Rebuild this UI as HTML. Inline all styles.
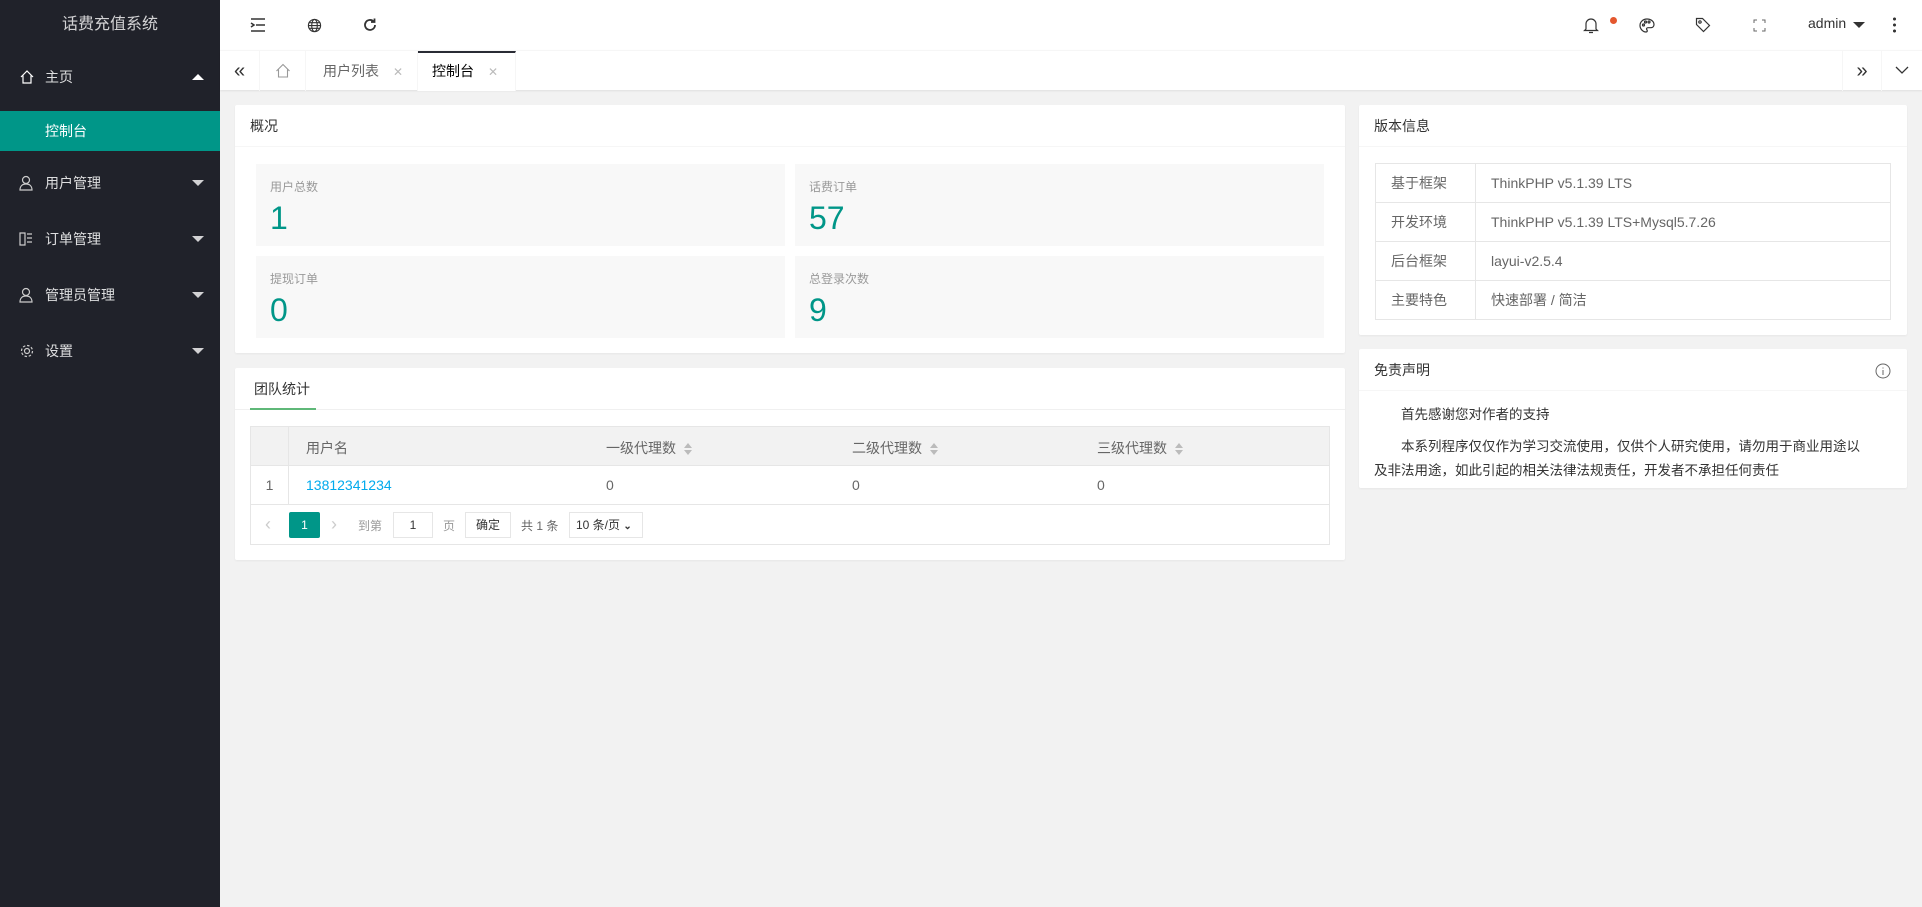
<!DOCTYPE html>
<html><head><meta charset="utf-8">
<style>
*{box-sizing:border-box;margin:0;padding:0}
body{width:1922px;height:907px;overflow:hidden;background:#f2f2f2;font-family:"Liberation Sans","Noto Sans CJK SC",sans-serif;font-size:14px;color:#333;position:relative}
.abs{position:absolute}
#side{left:0;top:0;width:220px;height:907px;background:#20222a;color:#fff}
#logo{top:0;left:0;width:220px;height:50px;line-height:50px;text-align:center;font-size:16px;color:rgba(255,255,255,.8)}
.nav{left:0;width:220px;height:56px;line-height:56px;color:rgba(255,255,255,.85);font-size:14px}
.nav .t{position:absolute;left:45px}
.nav svg.ic{position:absolute;left:19px;top:20px}
.nav .ar{position:absolute;right:16px;top:25px;width:0;height:0;border:6px solid transparent;border-top-color:rgba(255,255,255,.8);border-bottom:none}
.nav .ar.up{border-top:none;border-bottom:6px solid #fff;top:25px}
#act{left:0;top:111px;width:220px;height:40px;background:#009688;color:#fff;line-height:40px;padding-left:45px}
#hdr{left:220px;top:0;right:0;height:50px;background:#fff}
#tabs{left:220px;top:50px;right:0;height:40px;background:#fff;border-top:1px solid #f6f6f6;box-shadow:0 1px 2px rgba(0,0,0,.08)}
.tab{position:absolute;top:0;height:40px;line-height:40px;font-size:14px;color:#666;border-right:1px solid #f6f6f6}
.x{color:#bbb;font-size:12px;margin-left:14px}
.card{background:#fff;border-radius:2px;box-shadow:0 1px 2px rgba(0,0,0,.05)}
.ch{height:42px;line-height:42px;padding-left:15px;border-bottom:1px solid #f6f6f6;font-size:14px;color:#333}
.stat{background:#f8f8f8;position:absolute;width:529px;height:82px}
.stat .l{position:absolute;left:14px;top:14px;font-size:12px;color:#999}
.stat .n{position:absolute;left:14px;top:36px;font-size:32px;color:#009688;line-height:36px}
table{border-collapse:collapse}
.vt td{border:1px solid #e6e6e6;height:39px;padding-left:15px;color:#666;font-size:14px}
.sort{display:inline-block;vertical-align:middle;margin-left:8px;width:8px;height:12px;position:relative}
.sort:before{content:"";position:absolute;top:0;left:0;border:4px solid transparent;border-bottom:5px solid #bbb;border-top:none}
.sort:after{content:"";position:absolute;bottom:0;left:0;border:4px solid transparent;border-top:5px solid #bbb;border-bottom:none}
</style></head><body>
<div id="side" class="abs">
<div id="logo" class="abs">话费充值系统</div>
<div class="nav abs" style="top:49px"><svg class="ic" width="16" height="16" viewBox="0 0 16 16" fill="none" stroke="#fff" stroke-width="1.2"><path d="M2 8L8 2l6 6M4 6.5V14h8V6.5"/></svg><span class="t">主页</span><i class="ar up"></i></div>
<div id="act" class="abs">控制台</div>
<div class="nav abs" style="top:155px"><svg class="ic" width="14" height="16" viewBox="0 0 14 16" fill="none" stroke="#ccc" stroke-width="1.2"><circle cx="7" cy="5" r="3.5"/><path d="M1 15c0-4 2.5-6 6-6s6 2 6 6z"/></svg><span class="t">用户管理</span><i class="ar"></i></div>
<div class="nav abs" style="top:211px"><svg class="ic" width="14" height="16" viewBox="0 0 14 16" fill="none" stroke="#ccc" stroke-width="1.2"><path d="M1 2h5v12H1zM8 3h5M8 7h5M8 11h5"/></svg><span class="t">订单管理</span><i class="ar"></i></div>
<div class="nav abs" style="top:267px"><svg class="ic" width="14" height="16" viewBox="0 0 14 16" fill="none" stroke="#ccc" stroke-width="1.2"><circle cx="7" cy="5" r="3.5"/><path d="M1 15c0-4 2.5-6 6-6s6 2 6 6z"/></svg><span class="t">管理员管理</span><i class="ar"></i></div>
<div class="nav abs" style="top:323px"><svg class="ic" width="16" height="16" viewBox="0 0 16 16" fill="none" stroke="#ccc" stroke-width="1.2"><circle cx="8" cy="8" r="2.5"/><circle cx="8" cy="8" r="5.5" stroke-dasharray="2.5 1.8"/></svg><span class="t">设置</span><i class="ar"></i></div>
</div>

<div id="hdr" class="abs">
<svg class="abs" style="left:30px;top:18px" width="16" height="14" viewBox="0 0 16 14" stroke="#333" stroke-width="1.5" fill="none"><path d="M1 1h14M6 7h9M1 13h14M1 5l3 2-3 2"/></svg>
<svg class="abs" style="left:87px;top:18px" width="15" height="15" viewBox="0 0 16 16" stroke="#333" stroke-width="1.2" fill="none"><circle cx="8" cy="8" r="6.5"/><ellipse cx="8" cy="8" rx="3" ry="6.5"/><path d="M1.5 8h13M2.5 5h11M2.5 11h11"/></svg>
<svg class="abs" style="left:142px;top:17px" width="16" height="16" viewBox="0 0 16 16" stroke="#333" stroke-width="1.8" fill="none"><path d="M13 8a5 5 0 1 1-1.5-3.6"/><path d="M12.5 1.5v3.5H9" /></svg>
<svg class="abs" style="left:1363px;top:17px" width="16" height="17" viewBox="0 0 16 17" stroke="#333" stroke-width="1.2" fill="none"><path d="M3 12V7a5 5 0 0 1 10 0v5l1.5 1.5h-13zM6 15.5h4"/></svg>
<div class="abs" style="left:1390px;top:17px;width:7px;height:7px;border-radius:50%;background:#e4572e"></div>
<svg class="abs" style="left:1419px;top:18px" width="16" height="15" viewBox="0 0 16 15" stroke="#333" stroke-width="1.2" fill="none"><path d="M8 1C4 1 1 4 1 7.5S4 14 7 14c1.5 0 1.5-1.5.8-2.3-.7-1 0-2 1.2-2h2.5C14 9.7 15 8 15 6.5 15 3.5 12 1 8 1z"/><circle cx="4.5" cy="7" r="1"/><circle cx="6.5" cy="4" r="1"/><circle cx="10" cy="4" r="1"/></svg>
<svg class="abs" style="left:1475px;top:17px" width="16" height="16" viewBox="0 0 16 16" stroke="#333" stroke-width="1.2" fill="none"><path d="M1.5 1.5h6l7 7-6 6-7-7z"/><circle cx="5" cy="5" r="1.2"/></svg>
<svg class="abs" style="left:1533px;top:19px" width="13" height="13" viewBox="0 0 13 13" stroke="#666" stroke-width="1" fill="none"><path d="M1 4V1h3M9 1h3v3M12 9v3H9M4 12H1V9"/></svg>
<div class="abs" style="left:1588px;top:15px;font-size:14px;color:#333">admin</div>
<div class="abs" style="left:1633px;top:22px;border:6px solid transparent;border-top:6px solid #333;border-bottom:none"></div>
<div class="abs" style="left:1673px;top:16px;width:3px;height:18px;background:radial-gradient(circle,#333 1.4px,transparent 1.6px) 0 0/3px 6px"></div>
</div>

<div id="tabs" class="abs">
<div class="tab" style="left:0;width:40px;text-align:center;font-size:20px;color:#333">«</div>
<div class="tab" style="left:40px;width:46px"><svg style="position:absolute;left:15px;top:12px" width="16" height="16" viewBox="0 0 16 16" fill="none" stroke="#999" stroke-width="1.1"><path d="M1.5 8L8 1.5 14.5 8M3.5 6.5V14h9V6.5"/></svg></div>
<div class="tab" style="left:86px;width:112px;padding-left:17px">用户列表<span class="x">✕</span></div>
<div class="tab" style="left:198px;width:98px;padding-left:14px;color:#000;background:#fff;border-top:2px solid #292b34;line-height:37px">控制台<span class="x">✕</span></div>
<div class="tab" style="left:1622px;width:40px;text-align:center;font-size:20px;color:#333;border-left:1px solid #f6f6f6">»</div>
<div class="tab" style="left:1662px;width:40px;border-right:none"><svg style="position:absolute;left:13px;top:15px" width="14" height="9" viewBox="0 0 14 9" fill="none" stroke="#333" stroke-width="1.3"><path d="M1 1l6 6 6-6"/></svg></div>
</div>

<div class="card abs" style="left:235px;top:105px;width:1110px;height:248px">
<div class="ch">概况</div>
<div class="stat" style="left:21px;top:59px"><span class="l">用户总数</span><span class="n">1</span></div>
<div class="stat" style="left:560px;top:59px"><span class="l">话费订单</span><span class="n">57</span></div>
<div class="stat" style="left:21px;top:151px"><span class="l">提现订单</span><span class="n">0</span></div>
<div class="stat" style="left:560px;top:151px"><span class="l">总登录次数</span><span class="n">9</span></div>
</div>

<div class="card abs" style="left:235px;top:368px;width:1110px;height:192px">
<div style="height:42px;border-bottom:1px solid #f0f0f0;position:relative"><span style="position:absolute;left:19px;top:11px;color:#333">团队统计</span><div style="position:absolute;left:15px;top:40px;width:66px;height:2px;background:#5fb878"></div></div>
<div class="abs" style="left:15px;top:58px;width:1080px;height:119px;border:1px solid #e6e6e6">
<div style="height:39px;background:#f2f2f2;border-bottom:1px solid #e6e6e6;position:relative;color:#666">
<div class="abs" style="left:0;top:0;width:38px;height:39px;border-right:1px solid #e6e6e6"></div>
<span class="abs" style="left:55px;top:11px">用户名</span>
<span class="abs" style="left:355px;top:11px">一级代理数<i class="sort"></i></span>
<span class="abs" style="left:601px;top:11px">二级代理数<i class="sort"></i></span>
<span class="abs" style="left:846px;top:11px">三级代理数<i class="sort"></i></span>
</div>
<div style="height:39px;border-bottom:1px solid #e6e6e6;position:relative;color:#666">
<div class="abs" style="left:0;top:0;width:38px;height:39px;border-right:1px solid #e6e6e6;text-align:center;line-height:39px">1</div>
<span class="abs" style="left:55px;top:11px;color:#01aaed">13812341234</span>
<span class="abs" style="left:355px;top:11px">0</span>
<span class="abs" style="left:601px;top:11px">0</span>
<span class="abs" style="left:846px;top:11px">0</span>
</div>
<div style="height:39px;position:relative;font-size:12px;color:#666">
<span class="abs" style="left:14px;top:10px;font-size:18px;line-height:18px;color:#ccc">‹</span>
<div class="abs" style="left:38px;top:7px;width:31px;height:26px;background:#009688;color:#fff;text-align:center;line-height:26px;border-radius:2px">1</div>
<span class="abs" style="left:80px;top:10px;font-size:18px;line-height:18px;color:#ccc">›</span>
<span class="abs" style="left:107px;top:12px;color:#999">到第</span>
<div class="abs" style="left:142px;top:7px;width:40px;height:26px;border:1px solid #e6e6e6;text-align:center;line-height:24px;color:#333">1</div>
<span class="abs" style="left:192px;top:12px;color:#999">页</span>
<div class="abs" style="left:214px;top:7px;width:46px;height:26px;border:1px solid #e6e6e6;text-align:center;line-height:24px;color:#333">确定</div>
<span class="abs" style="left:270px;top:12px">共 1 条</span>
<div class="abs" style="left:318px;top:7px;width:74px;height:26px;border:1px solid #e6e6e6;line-height:24px;padding-left:6px;color:#333">10 条/页 <b style="font-size:10px">⌄</b></div>
</div>
</div>
</div>

<div class="card abs" style="left:1359px;top:105px;width:548px;height:230px">
<div class="ch">版本信息</div>
<table class="vt abs" style="left:16px;top:58px;width:516px">
<tr><td style="width:100px">基于框架</td><td>ThinkPHP v5.1.39 LTS</td></tr>
<tr><td>开发环境</td><td>ThinkPHP v5.1.39 LTS+Mysql5.7.26</td></tr>
<tr><td>后台框架</td><td>layui-v2.5.4</td></tr>
<tr><td>主要特色</td><td>快速部署 / 简洁</td></tr>
</table>
</div>

<div class="card abs" style="left:1359px;top:349px;width:548px;height:139px">
<div class="ch">免责声明</div>
<svg class="abs" style="left:516px;top:14px" width="16" height="16" viewBox="0 0 16 16" fill="none" stroke="#666" stroke-width="1"><circle cx="8" cy="8" r="7"/><path d="M8 7v5M8 4.5v1"/></svg>
<div class="abs" style="left:15px;top:54px;width:496px;font-size:13.5px;color:#333;line-height:24px">
<p style="text-indent:2em;margin-bottom:8px">首先感谢您对作者的支持</p>
<p style="text-indent:2em">本系列程序仅仅作为学习交流使用，仅供个人研究使用，请勿用于商业用途以及非法用途，如此引起的相关法律法规责任，开发者不承担任何责任</p>
</div>
</div>
</body></html>
